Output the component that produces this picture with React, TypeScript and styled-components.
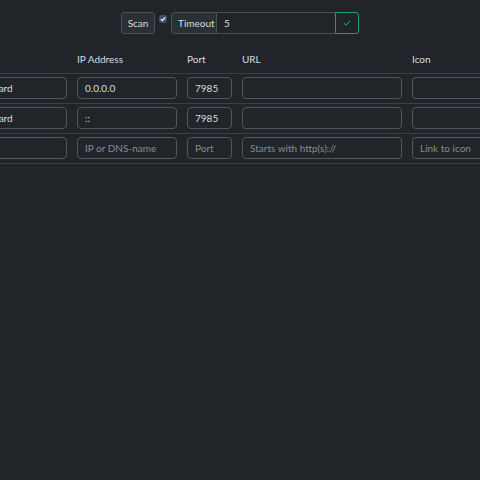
import React, { useState } from "react";
import styled, { createGlobalStyle } from "styled-components";

const GlobalStyle = createGlobalStyle`
  html, body {
    margin: 0;
    background: #212529;
    overflow: hidden;
  }
  body {
    font-family: Lato, "Noto Sans", sans-serif;
    font-size: 10px;
    color: #d8dce0;
  }
`;

const Page = styled.div`
  display: flex;
  flex-direction: column;
  align-items: center;
  padding-top: 12px;
  width: 480px;
`;

const Toolbar = styled.div`
  display: flex;
  align-items: center;
  gap: 3px;
`;

const ScanButton = styled.button`
  height: 22px;
  width: 34px;
  padding: 0;
  border: 1px solid #495057;
  border-radius: 3px;
  background: #2b3035;
  color: #d8dce0;
  font-family: inherit;
  font-size: 10px;
`;

const Check = styled.span<{ $on: boolean }>`
  width: 8px;
  height: 8px;
  margin: 3px 1px 0;
  align-self: flex-start;
  border-radius: 2px;
  background: ${(p) => (p.$on ? "#3d4f66" : "transparent")};
  display: flex;
  align-items: center;
  justify-content: center;
`;

const InputGroup = styled.div`
  display: flex;
  height: 22px;
`;

const GroupLabel = styled.span`
  display: flex;
  align-items: center;
  padding: 0 6px;
  width: 46px;
  box-sizing: border-box;
  border: 1px solid #495057;
  border-radius: 3px 0 0 3px;
  background: #2b3035;
`;

const GroupInput = styled.input`
  width: 118px;
  box-sizing: border-box;
  border: 1px solid #495057;
  border-left: none;
  border-right: none;
  background: #212529;
  color: #d8dce0;
  font-family: inherit;
  font-size: 10px;
  padding: 0 7px;
  outline: none;
`;

const ConfirmButton = styled.button`
  width: 24px;
  padding: 0;
  border: 1px solid #1f9e7a;
  border-radius: 0 3px 3px 0;
  background: #212529;
  display: flex;
  align-items: center;
  justify-content: center;
`;

const TableWrap = styled.div`
  display: flex;
  justify-content: center;
  width: 480px;
  margin-top: 17px;
`;

const Table = styled.table`
  flex-shrink: 0;
  border-collapse: collapse;
`;

const Th = styled.th`
  text-align: left;
  font-weight: 400;
  padding: 0 5px 7px;
  height: 15px;
  border-bottom: 1px solid #3b4046;
`;

const Row = styled.tr`
  border-bottom: 1px solid #3b4046;
`;

const Td = styled.td`
  padding: 3px 5px 4px;
`;

const Field = styled.input<{ $w: number }>`
  display: block;
  width: ${(p) => p.$w}px;
  height: 22px;
  box-sizing: border-box;
  border: 1px solid #51575e;
  border-radius: 4px;
  background: #212529;
  color: #d8dce0;
  font-family: inherit;
  font-size: 10px;
  padding: 0 7px;
  outline: none;
  &::placeholder {
    color: #868c92;
  }
`;

const columns = [
  { key: "name", label: "Name", w: 110, hint: "Name" },
  { key: "ip", label: "IP Address", w: 100, hint: "IP or DNS-name" },
  { key: "port", label: "Port", w: 45, hint: "Port" },
  { key: "url", label: "URL", w: 160, hint: "Starts with http(s)://" },
  { key: "icon", label: "Icon", w: 111, hint: "Link to icon" },
];

const services: Record<string, string>[] = [
  { name: "Dashboard", ip: "0.0.0.0", port: "7985", url: "", icon: "" },
  { name: "Dashboard", ip: "::", port: "7985", url: "", icon: "" },
];

const App = () => {
  const [scan, setScan] = useState(true);
  const [timeout, setTimeoutValue] = useState("5");

  return (
    <>
      <GlobalStyle />
      <Page>
        <Toolbar>
          <ScanButton>Scan</ScanButton>
          <Check $on={scan} onClick={() => setScan(!scan)}>
            {scan && (
              <svg width="6" height="6" viewBox="0 0 8 8">
                <path d="M1 4.2 3.2 6.2 7 1.8" fill="none" stroke="#fff" strokeWidth="1.6" />
              </svg>
            )}
          </Check>
          <InputGroup>
            <GroupLabel>Timeout</GroupLabel>
            <GroupInput value={timeout} onChange={(e) => setTimeoutValue(e.target.value)} />
            <ConfirmButton>
              <svg width="8" height="8" viewBox="0 0 8 8">
                <path d="M1 4.3 3 6.2 7 2" fill="none" stroke="#1fb589" strokeWidth="1" />
              </svg>
            </ConfirmButton>
          </InputGroup>
        </Toolbar>
        <TableWrap>
          <Table>
            <thead>
              <tr>
                {columns.map((c) => (
                  <Th key={c.key}>{c.label}</Th>
                ))}
              </tr>
            </thead>
            <tbody>
              {services.map((s, i) => (
                <Row key={i}>
                  {columns.map((c) => (
                    <Td key={c.key}>
                      <Field $w={c.w} defaultValue={s[c.key]} />
                    </Td>
                  ))}
                </Row>
              ))}
              <Row>
                {columns.map((c) => (
                  <Td key={c.key}>
                    <Field $w={c.w} placeholder={c.key === "name" ? "" : c.hint} />
                  </Td>
                ))}
              </Row>
            </tbody>
          </Table>
        </TableWrap>
      </Page>
    </>
  );
};

export default App;
